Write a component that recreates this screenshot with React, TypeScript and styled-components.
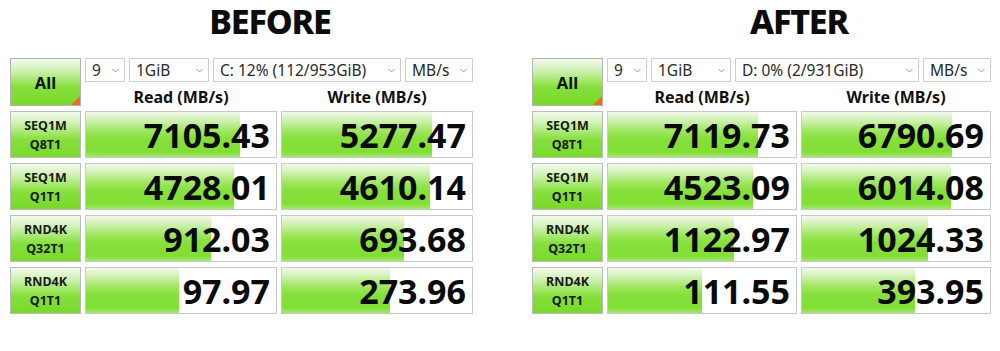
import React from "react";
import styled, { createGlobalStyle } from "styled-components";

const GlobalStyle = createGlobalStyle`
  html, body {
    margin: 0;
    padding: 0;
    background: #ffffff;
  }
  body {
    font-family: "Noto Sans", "Open Sans", "DejaVu Sans", sans-serif;
    color: #111;
  }
`;

type Row = { name: string; sub: string; read: string; write: string; rf: number; wf: number };

type PanelData = {
  title: string;
  drive: string;
  cell: number;
  shift: number;
  rows: Row[];
};

const panels: PanelData[] = [
  {
    title: "BEFORE",
    drive: "C: 12% (112/953GiB)",
    cell: 192,
    shift: 18,
    rows: [
      { name: "SEQ1M", sub: "Q8T1", read: "7105.43", write: "5277.47", rf: 0.81, wf: 0.79 },
      { name: "SEQ1M", sub: "Q1T1", read: "4728.01", write: "4610.14", rf: 0.78, wf: 0.78 },
      { name: "RND4K", sub: "Q32T1", read: "912.03", write: "693.68", rf: 0.66, wf: 0.64 },
      { name: "RND4K", sub: "Q1T1", read: "97.97", write: "273.96", rf: 0.49, wf: 0.57 },
    ],
  },
  {
    title: "AFTER",
    drive: "D: 0% (2/931GiB)",
    cell: 190,
    shift: -4,
    rows: [
      { name: "SEQ1M", sub: "Q8T1", read: "7119.73", write: "6790.69", rf: 0.8, wf: 0.8 },
      { name: "SEQ1M", sub: "Q1T1", read: "4523.09", write: "6014.08", rf: 0.77, wf: 0.79 },
      { name: "RND4K", sub: "Q32T1", read: "1122.97", write: "1024.33", rf: 0.67, wf: 0.67 },
      { name: "RND4K", sub: "Q1T1", read: "111.55", write: "393.95", rf: 0.5, wf: 0.6 },
    ],
  },
];

const Page = styled.div`
  display: flex;
  align-items: flex-start;
  gap: 59px;
  padding-left: 10px;
`;

const Panel = styled.section`
  display: flex;
  flex-direction: column;
`;

const Title = styled.h1<{ $shift: number }>`
  margin: 0 0 16px 75px;
  padding-right: ${(p) => p.$shift}px;
  font-size: 34px;
  line-height: 42px;
  font-weight: 800;
  letter-spacing: -1.2px;
  text-align: center;
  color: #0c0c0c;
`;

const Grid = styled.div<{ $cell: number }>`
  display: grid;
  grid-template-columns: 71px ${(p) => p.$cell}px ${(p) => p.$cell}px;
  grid-template-rows: 24px 19px repeat(4, 47px);
  column-gap: 4px;
  row-gap: 5px;
`;

const greenFace = `linear-gradient(to bottom, #f3faee 0%, #d4f2bb 22%, #a6e870 45%, #86df3c 62%, #7ad92b 100%)`;

const AllButton = styled.div`
  grid-row: 1 / span 2;
  position: relative;
  display: flex;
  align-items: center;
  justify-content: center;
  border: 1px solid #b4b4b4;
  background: ${greenFace};
  font-size: 16.5px;
  font-weight: 700;
  color: #111;
  overflow: hidden;

  &::after {
    content: "";
    position: absolute;
    right: 0;
    bottom: 0;
    border-style: solid;
    border-width: 0 0 9px 9px;
    border-color: transparent transparent #f26b1d transparent;
  }
`;

const SelectBar = styled.div`
  grid-column: 2 / span 2;
  display: flex;
  gap: 4px;
`;

const Select = styled.div<{ $w: number; $grow?: boolean }>`
  box-sizing: border-box;
  width: ${(p) => p.$w}px;
  flex: ${(p) => (p.$grow ? "1 1 auto" : "0 0 auto")};
  height: 24px;
  display: flex;
  align-items: center;
  justify-content: space-between;
  padding: 0 5px 0 6px;
  border: 1px solid #cfcfcf;
  background: #fff;
  font-size: 15.5px;
  color: #2a2a2a;
  white-space: nowrap;
`;

const Chevron = () => (
  <svg width="7" height="5" viewBox="0 0 7 5" fill="none">
    <path d="M0.5 1 L3.5 4 L6.5 1" stroke="#9a9a9a" strokeWidth="1" />
  </svg>
);

const Header = styled.div`
  display: flex;
  align-items: flex-end;
  justify-content: center;
  font-size: 16px;
  font-weight: 700;
  line-height: 18px;
  color: #111;
`;

const Label = styled.div`
  display: flex;
  flex-direction: column;
  align-items: center;
  justify-content: center;
  border: 1px solid #bcbcbc;
  background: ${greenFace};
  font-size: 12.5px;
  font-weight: 700;
  line-height: 19px;
  color: #1a1a1a;
`;

const Cell = styled.div`
  position: relative;
  border: 1px solid #c9c9c9;
  background: #fff;
  overflow: hidden;
`;

const Fill = styled.div`
  position: absolute;
  left: 0;
  top: 0;
  bottom: 0;
  background: linear-gradient(
    to bottom,
    #f2faec 0%,
    #cdf0ae 20%,
    #9ee65f 42%,
    #86e03b 60%,
    #82de35 88%,
    #a4e86d 100%
  );
`;

const Value = styled.div`
  position: relative;
  padding: 2px 6px 0 0;
  text-align: right;
  font-size: 34px;
  font-weight: 700;
  line-height: 43px;
  color: #0a0a0a;
`;

const Result = ({ value, fraction }: { value: string; fraction: number }) => (
  <Cell>
    <Fill style={{ width: `${fraction * 100}%` }} />
    <Value>{value}</Value>
  </Cell>
);

const BenchPanel = ({ data }: { data: PanelData }) => (
  <Panel>
    <Title $shift={data.shift}>{data.title}</Title>
    <Grid $cell={data.cell}>
      <AllButton>All</AllButton>
      <SelectBar>
        <Select $w={40}>
          9 <Chevron />
        </Select>
        <Select $w={80}>
          1GiB <Chevron />
        </Select>
        <Select $w={188} $grow>
          {data.drive} <Chevron />
        </Select>
        <Select $w={68}>
          MB/s <Chevron />
        </Select>
      </SelectBar>
      <Header>Read (MB/s)</Header>
      <Header>Write (MB/s)</Header>
      {data.rows.map((r, i) => (
        <React.Fragment key={i}>
          <Label>
            <span>{r.name}</span>
            <span>{r.sub}</span>
          </Label>
          <Result value={r.read} fraction={r.rf} />
          <Result value={r.write} fraction={r.wf} />
        </React.Fragment>
      ))}
    </Grid>
  </Panel>
);

export default function App() {
  return (
    <>
      <GlobalStyle />
      <Page>
        {panels.map((p) => (
          <BenchPanel key={p.title} data={p} />
        ))}
      </Page>
    </>
  );
}
